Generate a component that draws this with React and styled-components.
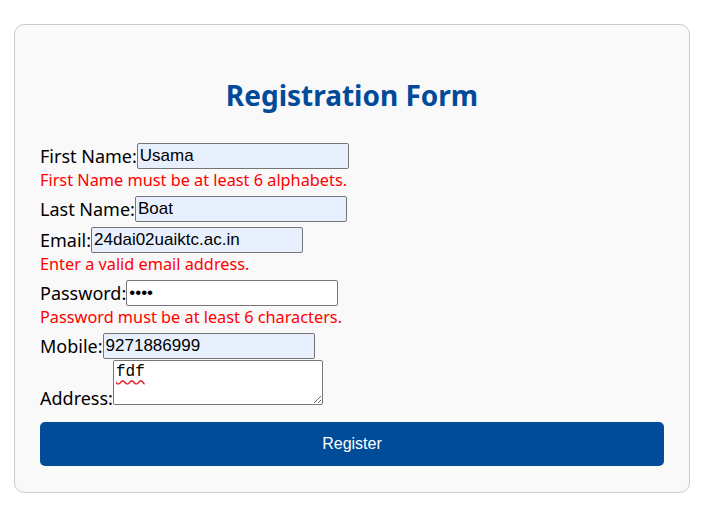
import React from 'react';
import styled, { createGlobalStyle } from 'styled-components';

const GlobalStyle = createGlobalStyle`
  body {
    margin: 8px;
    background: #ffffff;
    font-family: "Noto Sans", "Open Sans", sans-serif;
  }
`;

const fields = [
  { label: 'First Name:', value: 'Usama', error: 'First Name must be at least 6 alphabets.', filled: true },
  { label: 'Last Name:', value: 'Boat', filled: true },
  { label: 'Email:', value: '24dai02uaiktc.ac.in', error: 'Enter a valid email address.', filled: true },
  { label: 'Password:', value: 'abcd', type: 'password', error: 'Password must be at least 6 characters.' },
  { label: 'Mobile:', value: '9271886999', filled: true, tight: true },
];

const App = () => {
  return (
    <>
      <GlobalStyle />
      <Card>
        <Title>Registration Form</Title>
        <form onSubmit={(e) => e.preventDefault()}>
          {fields.map((f) => (
            <FieldGroup key={f.label} $tight={f.tight}>
              <Row>
                <Label>{f.label}</Label>
                <Input
                  type={f.type || 'text'}
                  defaultValue={f.value}
                  $filled={f.filled}
                />
              </Row>
              {f.error && <Error>{f.error}</Error>}
            </FieldGroup>
          ))}
          <FieldGroup>
            <Row $multiline>
              <Label>Address:</Label>
              <TextArea defaultValue="fdf" spellCheck={false} />
            </Row>
          </FieldGroup>
          <Button type="submit">Register</Button>
        </form>
      </Card>
    </>
  );
};

const Card = styled.div`
  margin: 16px 16px 0 6px;
  padding: 25px 25px 26px;
  background: #f9f9f9;
  border: 1px solid #cccccc;
  border-radius: 10px;
`;

const Title = styled.h2`
  margin: 26px 0 29px;
  text-align: center;
  color: #004a99;
  font-size: 28px;
  font-weight: bold;
`;

const FieldGroup = styled.div`
  margin-bottom: ${(p) => (p.$tight ? '1px' : '5px')};
`;

const Row = styled.div`
  display: ${(p) => (p.$multiline ? 'block' : 'flex')};
  align-items: center;
  height: ${(p) => (p.$multiline ? 'auto' : '26px')};
  font-size: 18px;
  line-height: 24px;
  color: #000;
`;

const Label = styled.label`
  font-size: 18px;
`;

const Input = styled.input`
  box-sizing: border-box;
  width: 212px;
  height: 26px;
  padding: 1px 2px;
  font-family: "Liberation Sans", Arial, sans-serif;
  font-size: 17px;
  color: #000;
  background: ${(p) => (p.$filled ? '#e8f0fe' : '#ffffff')};
  border: 1px solid #767676;
  border-radius: 2px;
  outline: none;
`;

const Error = styled.div`
  color: #ff0000;
  font-size: 16.3px;
  line-height: 22px;
`;

const TextArea = styled.textarea`
  box-sizing: border-box;
  width: 210px;
  height: 45px;
  margin: 0;
  padding: 2px 2px;
  font-family: "Liberation Mono", monospace;
  font-size: 16px;
  line-height: 18px;
  color: #000;
  background: #ffffff;
  border: 1px solid #767676;
  border-radius: 2px;
  outline: none;
  text-decoration: underline wavy #e03030;
  text-underline-offset: 3px;
`;

const Button = styled.button`
  display: block;
  width: 100%;
  height: 44px;
  margin-top: 12px;
  background: #004c99;
  color: #ffffff;
  border: none;
  border-radius: 5px;
  font-family: "Liberation Sans", Arial, sans-serif;
  font-size: 16px;
  cursor: pointer;
`;

export default App;
